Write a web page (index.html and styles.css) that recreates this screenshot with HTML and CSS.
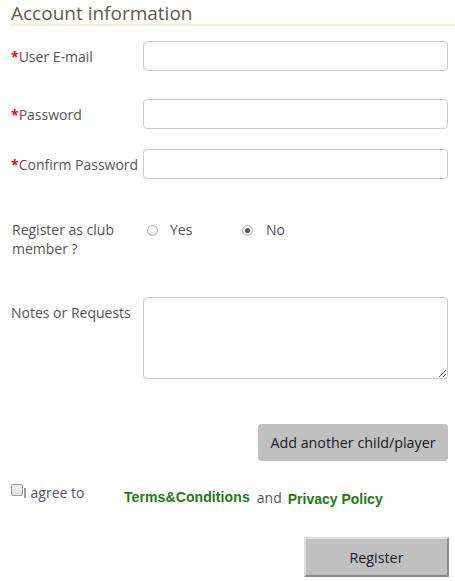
FILE: index.html
```html
<!DOCTYPE html>
<html lang="en">
<head>
<meta charset="utf-8">
<title>Account information</title>
<link rel="stylesheet" href="styles.css">
</head>
<body>
<form class="form">
  <h2 class="heading">Account information</h2>

  <div class="row row-email">
    <label class="label"><span class="req">*</span>User E-mail</label>
    <input class="field" type="email">
  </div>

  <div class="row row-pass">
    <label class="label"><span class="req">*</span>Password</label>
    <input class="field" type="password">
  </div>

  <div class="row row-confirm">
    <label class="label"><span class="req">*</span>Confirm Password</label>
    <input class="field" type="password">
  </div>

  <div class="row row-top row-club">
    <label class="label label-club">Register as club member ?</label>
    <div class="radios">
      <label class="option"><input class="radio" type="radio" name="club"><span>Yes</span></label>
      <label class="option"><input class="radio" type="radio" name="club" checked><span>No</span></label>
    </div>
  </div>

  <div class="row row-top row-notes">
    <label class="label label-notes">Notes or Requests</label>
    <textarea class="field area"></textarea>
  </div>

  <div class="actions actions-add">
    <button type="button" class="btn btn-add">Add another child/player</button>
  </div>

  <div class="agree">
    <label class="agree-box"><input class="check" type="checkbox"><span>I agree to</span></label>
    <a class="link link-terms">Terms&amp;Conditions</a>
    <span class="and">and</span>
    <a class="link link-privacy">Privacy Policy</a>
  </div>

  <div class="actions actions-register">
    <button type="button" class="btn btn-register">Register</button>
  </div>
</form>
</body>
</html>
```

FILE: styles.css
```css
html, body {
  margin: 0;
  padding: 0;
  background: #ffffff;
}

body {
  font-family: "Open Sans", "DejaVu Sans", sans-serif;
  font-size: 14px;
  color: #555555;
}

.form {
  padding: 0 7px 0 11px;
}

.heading {
  margin: 2px -7px 0 0;
  font-size: 19px;
  font-weight: 400;
  line-height: 22px;
  color: #665849;
  border-bottom: 2px solid #efefd6;
}

.row {
  display: flex;
  align-items: center;
}

.row-top {
  align-items: flex-start;
}

.row-email { margin-top: 15px; }
.row-pass { margin-top: 28px; }
.row-confirm { margin-top: 20px; }
.row-club { margin-top: 41px; }
.row-notes { margin-top: 39px; }

.label {
  width: 132px;
  flex: none;
  line-height: 19px;
  color: #555555;
}

.label-club {
  padding-left: 1px;
  width: 131px;
}

.label-notes {
  padding-top: 6px;
}

.req {
  color: #ff0000;
  font-weight: 700;
}

.field {
  flex: 1;
  box-sizing: border-box;
  height: 30px;
  margin: 0;
  border: 1px solid #cccccc;
  border-radius: 4px;
  background: #ffffff;
  font: inherit;
  padding: 4px 8px;
}

.area {
  height: 82px;
  resize: both;
}

.radios {
  display: flex;
  padding-left: 4px;
}

.option {
  display: flex;
  align-items: center;
  gap: 12px;
  width: 95px;
  line-height: 19px;
  color: #555560;
}

.option + .option {
  gap: 13px;
}

.radio {
  appearance: none;
  -webkit-appearance: none;
  margin: 1px 0 0 0;
  width: 11px;
  height: 11px;
  border-radius: 50%;
  border: 1px solid #b4b4b4;
  background: radial-gradient(circle at 50% 35%, #ffffff 0%, #e6e6e6 100%);
  box-sizing: border-box;
  display: grid;
  place-items: center;
}

.radio:checked::after {
  content: "";
  width: 5px;
  height: 5px;
  border-radius: 50%;
  background: #555555;
}

.actions {
  display: flex;
  justify-content: flex-end;
}

.actions-add { margin-top: 45px; }
.actions-register { margin-top: 30px; }

.btn {
  font-family: "Open Sans", "DejaVu Sans", sans-serif;
  font-size: 14.3px;
  color: #1a1a24;
  background: #c0c0c0;
  cursor: pointer;
  padding: 0;
  margin: 0;
}

.btn-add {
  width: 190px;
  height: 37px;
  border: none;
  border-radius: 4px;
}

.btn-register {
  width: 145px;
  height: 40px;
  border-top: 2px solid #dedede;
  border-left: 2px solid #dedede;
  border-right: 2px solid #8a8a8a;
  border-bottom: 2px solid #8a8a8a;
  border-radius: 1px;
  margin-right: -1px;
}

.agree {
  display: flex;
  align-items: flex-start;
  margin-top: 22px;
}

.agree-box {
  display: flex;
  align-items: flex-start;
  width: 113px;
  flex: none;
  line-height: 19px;
  color: #555560;
}

.check {
  appearance: none;
  -webkit-appearance: none;
  margin: 1px 0 0 0;
  width: 12px;
  height: 12px;
  box-sizing: border-box;
  border: 1px solid #9a9a9a;
  border-radius: 2px;
  background: linear-gradient(#f4f4f4, #dcdcdc);
}

.link {
  font-family: "Liberation Sans", Arial, sans-serif;
  font-size: 14px;
  font-weight: 700;
  line-height: 16px;
  color: #1f7a12;
  text-decoration: none;
}

.link-terms {
  margin-top: 6px;
  letter-spacing: 0.1px;
}

.link-privacy { margin-top: 8px; }

.and {
  margin: 5px 6px 0 7px;
  line-height: 19px;
  color: #555560;
}
```
